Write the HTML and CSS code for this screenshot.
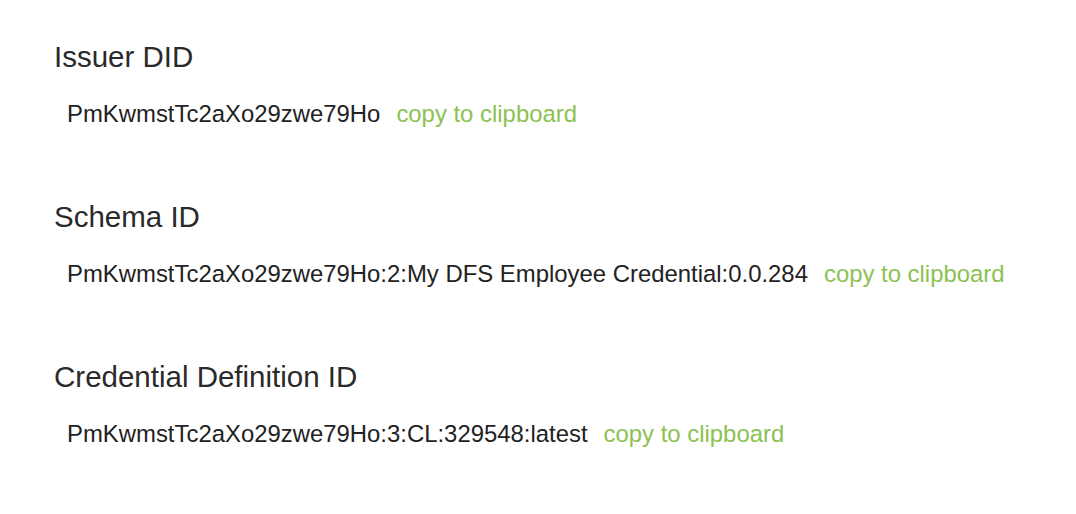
FILE: index.html
```html
<!DOCTYPE html>
<html lang="en">
<head>
<meta charset="utf-8">
<title>Credential IDs</title>
<link rel="stylesheet" href="styles.css">
</head>
<body>
<main class="page">
  <section class="field">
    <h2 class="field-title">Issuer DID</h2>
    <div class="field-row">
      <span class="field-value">PmKwmstTc2aXo29zwe79Ho</span>
      <a class="copy-link" href="#">copy to clipboard</a>
    </div>
  </section>
  <section class="field">
    <h2 class="field-title">Schema ID</h2>
    <div class="field-row">
      <span class="field-value">PmKwmstTc2aXo29zwe79Ho:2:My DFS Employee Credential:0.0.284</span>
      <a class="copy-link" href="#">copy to clipboard</a>
    </div>
  </section>
  <section class="field">
    <h2 class="field-title">Credential Definition ID</h2>
    <div class="field-row">
      <span class="field-value">PmKwmstTc2aXo29zwe79Ho:3:CL:329548:latest</span>
      <a class="copy-link" href="#">copy to clipboard</a>
    </div>
  </section>
</main>
</body>
</html>
```
FILE: styles.css
```css
html, body {
  margin: 0;
  padding: 0;
  background: #ffffff;
}

body {
  font-family: "Liberation Sans", Arial, Helvetica, sans-serif;
  color: #222222;
}

.page {
  display: flex;
  flex-direction: column;
  gap: 72px;
  padding: 40px 0 0 54px;
}

.field {
  display: flex;
  flex-direction: column;
}

.field-title {
  margin: 0;
  font-size: 29.5px;
  line-height: 34px;
  font-weight: normal;
  color: #2a2a2a;
}

.field-row {
  display: flex;
  align-items: baseline;
  gap: 16px;
  margin-top: 26px;
  padding-left: 13px;
  font-size: 23.9px;
  line-height: 28px;
  white-space: nowrap;
}

.field-value {
  color: #222222;
}

.copy-link {
  color: #8cc152;
  text-decoration: none;
}
```
